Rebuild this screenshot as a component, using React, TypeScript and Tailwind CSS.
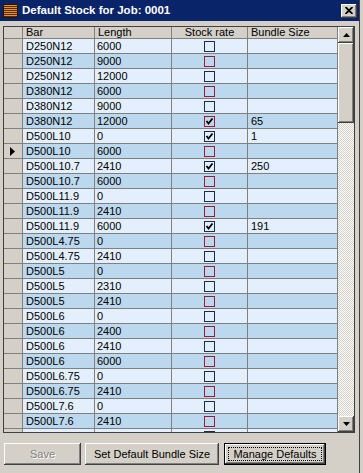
import React from "react";

type Row = [string, string, boolean, string];

const rows: Row[] = [
  ["D250N12", "6000", false, ""],
  ["D250N12", "9000", false, ""],
  ["D250N12", "12000", false, ""],
  ["D380N12", "6000", false, ""],
  ["D380N12", "9000", false, ""],
  ["D380N12", "12000", true, "65"],
  ["D500L10", "0", true, "1"],
  ["D500L10", "6000", false, ""],
  ["D500L10.7", "2410", true, "250"],
  ["D500L10.7", "6000", false, ""],
  ["D500L11.9", "0", false, ""],
  ["D500L11.9", "2410", false, ""],
  ["D500L11.9", "6000", true, "191"],
  ["D500L4.75", "0", false, ""],
  ["D500L4.75", "2410", false, ""],
  ["D500L5", "0", false, ""],
  ["D500L5", "2310", false, ""],
  ["D500L5", "2410", false, ""],
  ["D500L6", "0", false, ""],
  ["D500L6", "2400", false, ""],
  ["D500L6", "2410", false, ""],
  ["D500L6", "6000", false, ""],
  ["D500L6.75", "0", false, ""],
  ["D500L6.75", "2410", false, ""],
  ["D500L7.6", "0", false, ""],
  ["D500L7.6", "2410", false, ""],
  ["", "", false, ""],
];

function CheckBox({ checked, red }: { checked: boolean; red: boolean }) {
  return (
    <div
      className={
        "w-[11px] h-[11px] border flex items-center justify-center " +
        (red ? "border-[#9c1c34]" : "border-[#1c2c4c]")
      }
    >
      {checked && (
        <svg width="9" height="9" viewBox="0 0 9 9">
          <polyline points="1.5,4 3.5,6.5 7.5,1.5" fill="none" stroke="#000" strokeWidth="1.8" />
        </svg>
      )}
    </div>
  );
}

const bevel =
  "shadow-[inset_-1px_-1px_#404040,inset_1px_1px_#ffffff,inset_-2px_-2px_#808080]";

function ArrowBtn({ up }: { up: boolean }) {
  return (
    <div className={"w-[16px] h-[16px] shrink-0 bg-[#d4d0c8] flex items-center justify-center " + bevel}>
      <svg width="7" height="4" viewBox="0 0 7 4">
        {up ? <polygon points="3.5,0 7,4 0,4" fill="#000" /> : <polygon points="0,0 7,0 3.5,4" fill="#000" />}
      </svg>
    </div>
  );
}

export default function App() {
  return (
    <div
      className="w-[363px] h-[473px] bg-[#d4d0c8] flex overflow-hidden text-black"
      style={{ fontFamily: '"Liberation Sans", Arial, sans-serif' }}
    >
      <div className="w-[359px] flex flex-col">
        {/* Title bar */}
        <div className="h-[21px] bg-[#0a246a] flex items-center pl-[3px] pr-[2px]">
          <svg width="15" height="14" viewBox="0 0 15 14" className="shrink-0">
            <rect x="0" y="0" width="15" height="14" fill="#2a1400" />
            {[1, 3, 5, 7, 9, 11].map((y) => (
              <rect key={y} x="1" y={y} width="13" height="1.2" fill="#f0902c" />
            ))}
          </svg>
          <span className="ml-[4px] text-white font-bold text-[11.5px] leading-none flex-1">
            Default Stock for Job: 0001
          </span>
          <div className={"w-[16px] h-[14px] bg-[#d4d0c8] flex items-center justify-center " + bevel}>
            <svg width="8" height="7" viewBox="0 0 8 7">
              <path d="M0.5 0 L7.5 7 M7.5 0 L0.5 7" stroke="#000" strokeWidth="1.8" />
            </svg>
          </div>
        </div>

        {/* Grid */}
        <div className="mt-[5px] ml-[3px] w-[352px] h-[407px] border border-[#404040] flex">
          <div className="w-[334px] h-full flex flex-col overflow-hidden text-[11px] leading-none">
            {/* header */}
            <div className="flex h-[12px] shrink-0 bg-[#d4d0c8]">
              <div className="w-[19px] border-r border-b border-[#808080]" />
              <div className="w-[72px] border-r border-b border-[#808080] pl-[3px] flex items-center">Bar</div>
              <div className="w-[77px] border-r border-b border-[#808080] pl-[3px] flex items-center">Length</div>
              <div className="w-[76px] border-r border-b border-[#808080] flex items-center justify-center">Stock rate</div>
              <div className="w-[90px] border-r border-b border-[#808080] pl-[3px] flex items-center">Bundle Size</div>
            </div>
            {rows.map((r, i) => {
              const dark = i % 2 === 1;
              const bg = dark ? "bg-[#bcd8ee]" : "bg-[#e3effd]";
              return (
                <div key={i} className="flex h-[15px] shrink-0">
                  <div className="w-[19px] bg-[#d4d0c8] border-r border-b border-[#808080] flex items-center pl-[6px]">
                    {i === 7 && (
                      <svg width="5" height="9" viewBox="0 0 5 9">
                        <polygon points="0,0 5,4.5 0,9" fill="#000" />
                      </svg>
                    )}
                  </div>
                  <div className={"w-[72px] border-r border-b border-[#808080] pl-[3px] flex items-center " + bg}>{r[0]}</div>
                  <div className={"w-[77px] border-r border-b border-[#808080] pl-[2px] flex items-center " + bg}>{r[1]}</div>
                  <div className={"w-[76px] border-r border-b border-[#808080] flex items-center justify-center " + bg}>
                    <CheckBox checked={r[2]} red={dark} />
                  </div>
                  <div className={"w-[90px] border-r border-b border-[#808080] pl-[3px] flex items-center " + bg}>{r[3]}</div>
                </div>
              );
            })}
          </div>
          {/* scrollbar */}
          <div className="w-[16px] h-full flex flex-col">
            <ArrowBtn up />
            <div className={"h-[80px] shrink-0 bg-[#d4d0c8] " + bevel} />
            <div className="flex-1 bg-[repeating-conic-gradient(#d4d0c8_0_25%,#ffffff_0_50%)] bg-[length:2px_2px]" />
            <ArrowBtn up={false} />
          </div>
        </div>

        {/* Buttons */}
        <div className="mt-[10px] ml-[4px] flex gap-[4px] text-[11px]">
          <div className={"w-[77px] h-[22px] flex items-center justify-center text-[#808080] [text-shadow:1px_1px_#ffffff] " + bevel}>
            Save
          </div>
          <div className={"w-[134px] h-[22px] flex items-center justify-center " + bevel}>
            Set Default Bundle Size
          </div>
          <div className="ml-[1px] w-[102px] h-[22px] border border-black">
            <div className={"w-full h-full p-[3px] " + bevel}>
              <div className="w-full h-full border border-dotted border-black flex items-center justify-center">
                Manage Defaults
              </div>
            </div>
          </div>
        </div>
      </div>
      <div className="w-[1px] h-full bg-[#404040]" />
      <div className="flex-1 bg-[#d4d0c8]" />
    </div>
  );
}
